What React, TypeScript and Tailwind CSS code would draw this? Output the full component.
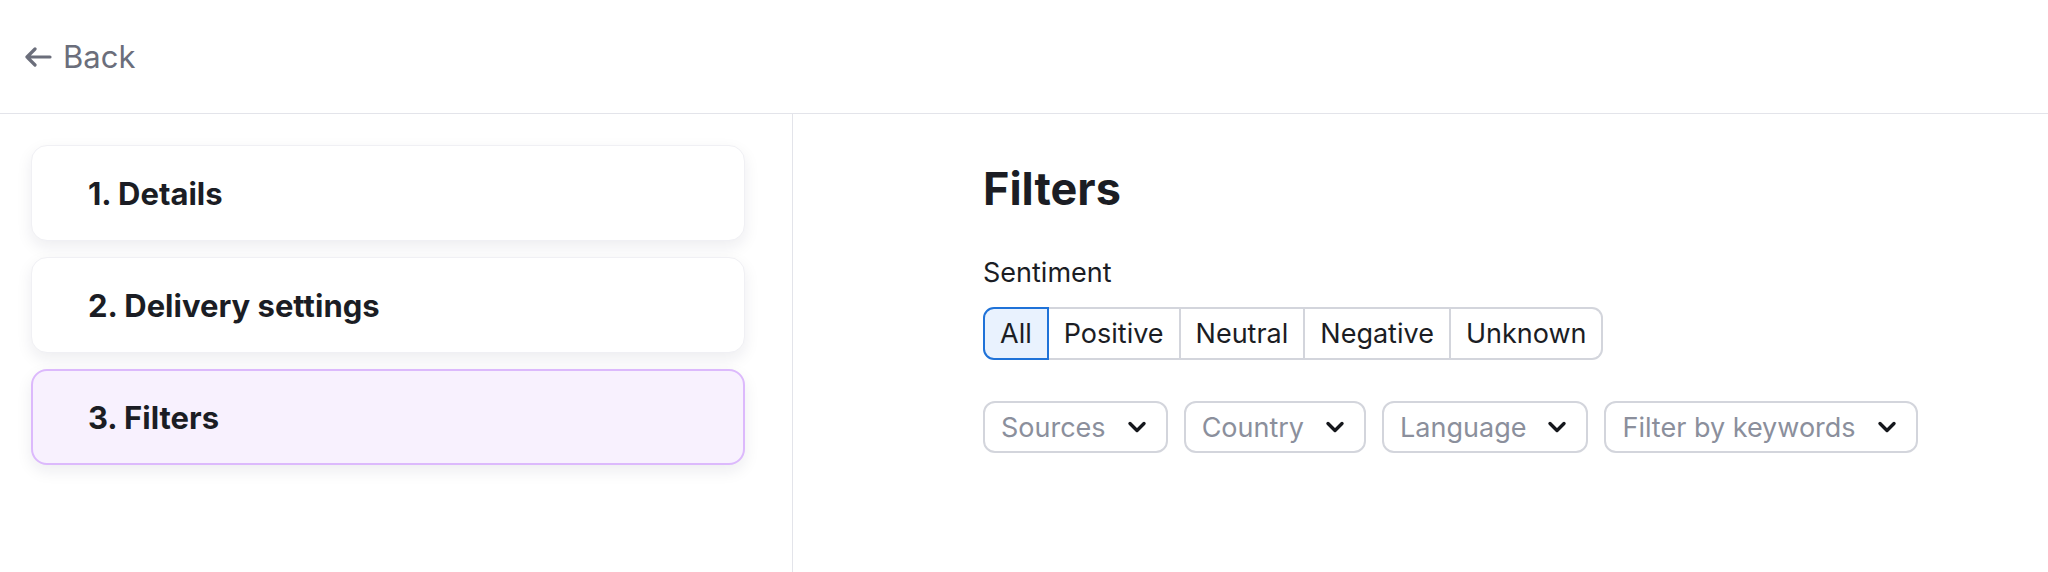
import React from 'react';

const steps = [
  { id: 1, label: '1. Details', active: false },
  { id: 2, label: '2. Delivery settings', active: false },
  { id: 3, label: '3. Filters', active: true },
];

const sentiments = ['All', 'Positive', 'Neutral', 'Negative', 'Unknown'];
const dropdowns = ['Sources', 'Country', 'Language', 'Filter by keywords'];

function BackArrow() {
  return (
    <svg width="28" height="20" viewBox="0 0 28 20" fill="none" className="text-[#6b6e7b]">
      <path d="M26 10H3M11 2L3 10l8 8" stroke="currentColor" strokeWidth="3.2" strokeLinecap="round" strokeLinejoin="round" />
    </svg>
  );
}

function Chevron() {
  return (
    <svg width="20" height="12" viewBox="0 0 20 12" fill="none" className="text-[#15171c]">
      <path d="M3 2.5l7 7 7-7" stroke="currentColor" strokeWidth="3.4" strokeLinecap="round" strokeLinejoin="round" />
    </svg>
  );
}

export default function App() {
  const selected = 'All';

  return (
    <div className="h-screen flex flex-col bg-white font-['Inter',sans-serif] text-[#1b1d24]">
      <header className="h-[114px] shrink-0 border-b border-[#e3e4ea] flex items-center pl-[24px]">
        <button className="flex items-center gap-[11px] text-[#6b6e7b] text-[31px] leading-none">
          <BackArrow />
          <span>Back</span>
        </button>
      </header>

      <div className="flex flex-1 min-h-0">
        <aside className="w-[793px] shrink-0 border-r border-[#e3e4ea] pl-[31px] pr-[47px] pt-[31px] flex flex-col gap-4">
          {steps.map((step) => (
            <div
              key={step.id}
              className={
                step.active
                  ? 'h-[96px] flex items-center pl-[55px] rounded-2xl border-2 border-[#dcb9fc] bg-[#f8f1fe] shadow-[0_6px_16px_rgba(30,30,60,0.08)]'
                  : 'h-[96px] flex items-center pl-[56px] rounded-2xl border border-[#f0f0f4] bg-white shadow-[0_6px_16px_rgba(30,30,60,0.08)]'
              }
            >
              <span className="text-[31px] leading-none font-bold text-[#1b1d24]">{step.label}</span>
            </div>
          ))}
        </aside>

        <main className="flex-1 pl-[190px] pt-[52px]">
          <h1 className="text-[45px] leading-none font-bold text-[#1b1d24]">Filters</h1>

          <div className="mt-[48px] text-[27px] leading-none text-[#1b1d24]">Sentiment</div>

          <div className="mt-[21px] flex h-[53px] w-fit">
            {sentiments.map((s, i) => {
              const isSel = s === selected;
              const first = i === 0;
              const last = i === sentiments.length - 1;
              return (
                <button
                  key={s}
                  className={[
                    'h-full px-[15px] text-[27px] leading-none flex items-center',
                    isSel ? 'bg-[#e9f2fe] border-2 border-[#1f72d8]' : 'bg-white border-y-2 border-r-2 border-[#d3d5dc]',
                    first ? 'rounded-l-[11px]' : '',
                    last ? 'rounded-r-[11px]' : '',
                  ].join(' ')}
                >
                  {s}
                </button>
              );
            })}
          </div>

          <div className="mt-[41px] flex gap-4">
            {dropdowns.map((d) => (
              <button
                key={d}
                className="h-[52px] flex items-center gap-[21px] pl-[16px] pr-[19px] rounded-[12px] border-2 border-[#d3d5dc] bg-white text-[27px] leading-none text-[#8b8f9c]"
              >
                <span>{d}</span>
                <Chevron />
              </button>
            ))}
          </div>
        </main>
      </div>
    </div>
  );
}
